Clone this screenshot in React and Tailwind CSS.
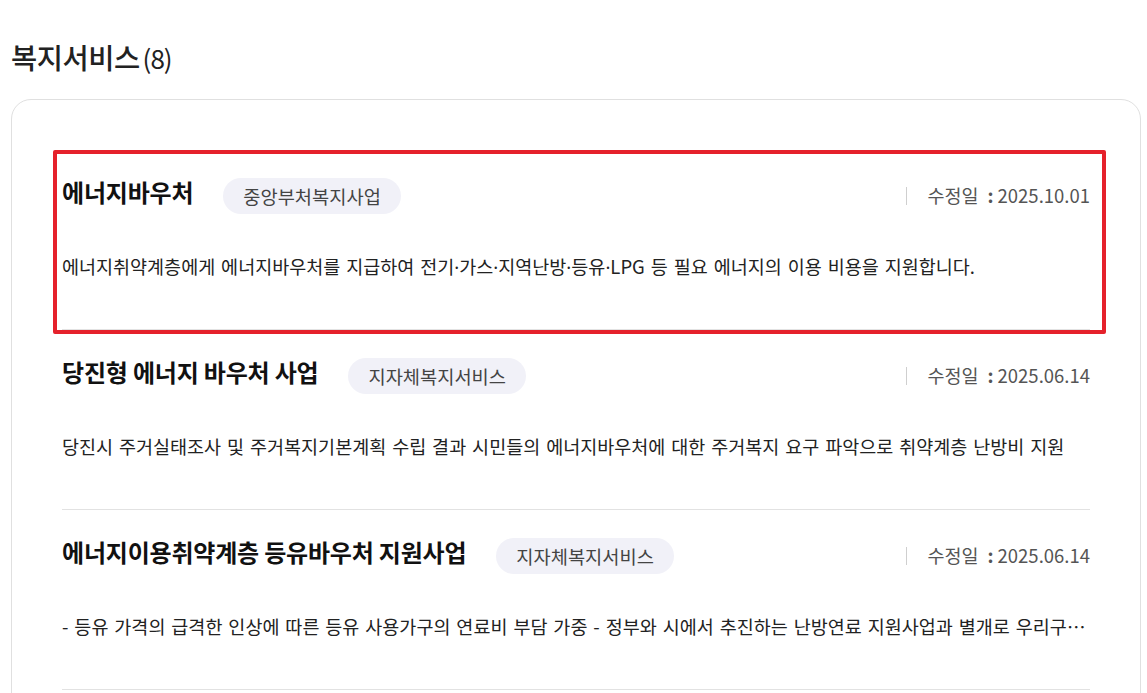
import React from "react";

const items = [
  {
    title: "에너지바우처",
    tag: "중앙부처복지사업",
    date: "2025.10.01",
    desc: "에너지취약계층에게 에너지바우처를 지급하여 전기·가스·지역난방·등유·LPG 등 필요 에너지의 이용 비용을 지원합니다.",
    marked: true,
  },
  {
    title: "당진형 에너지 바우처 사업",
    tag: "지자체복지서비스",
    date: "2025.06.14",
    desc: "당진시 주거실태조사 및 주거복지기본계획 수립 결과 시민들의 에너지바우처에 대한 주거복지 요구 파악으로 취약계층 난방비 지원",
  },
  {
    title: "에너지이용취약계층 등유바우처 지원사업",
    tag: "지자체복지서비스",
    date: "2025.06.14",
    desc: "- 등유 가격의 급격한 인상에 따른 등유 사용가구의 연료비 부담 가중 - 정부와 시에서 추진하는 난방연료 지원사업과 별개로 우리구 자체적으로 등유 사용 가구에 대한 추가 지원",
  },
  {
    title: "에너지 취약계층 난방비 지원",
    tag: "지자체복지서비스",
    date: "2025.05.20",
    desc: "에너지 취약계층의 겨울철 난방비 부담을 덜어드립니다.",
  },
];

// 가운뎃점은 CJK 폰트에서 전각으로 잡혀서 라틴 폰트로 따로 찍는다
function Desc({ text }) {
  const parts = text.split("·");
  return parts.map((p, i) => (
    <React.Fragment key={i}>
      {i > 0 && <span className="font-['Noto_Sans']">·</span>}
      {p}
    </React.Fragment>
  ));
}

function ServiceItem({ item }) {
  return (
    <li className="relative h-[180px] border-b border-[#e2e2e2] pt-[28px]">
      {item.marked && (
        <div className="absolute top-0 left-[-9px] right-[-16px] bottom-[-5px] rounded-[2px] border-[4px] border-[#e5212b] pointer-events-none" />
      )}
      <div className="flex items-center justify-between h-[28px]">
        <div className="flex items-center">
          <h3 className="text-[24px] leading-[28px] font-bold text-[#111] tracking-[-0.2px]">
            {item.title}
          </h3>
          <span className="ml-[30px] mt-[8px] h-[36px] px-[20px] flex items-center rounded-full bg-[#f1f1f8] text-[18.7px] text-[#444]">
            {item.tag}
          </span>
        </div>
        <div className="flex items-center mt-[8px] text-[18.5px] text-[#555]">
          <span className="w-px h-[18px] bg-[#cfcfcf] mr-[20px]" />
          <span>수정일</span>
          <span className="ml-[9px] mr-[4px] font-bold">:</span>
          <span>{item.date}</span>
        </div>
      </div>
      <p className="mt-[47px] text-[18.5px] leading-[26px] text-[#222] truncate [word-spacing:1.8px]">
        <Desc text={item.desc} />
      </p>
    </li>
  );
}

export default function App() {
  return (
    <div
      className="min-h-screen bg-white pl-[11px] pr-[6px] pt-[39px]"
      style={{ fontFamily: '"Noto Sans CJK KR", "Noto Sans", sans-serif' }}
    >
      <h2 className="flex items-baseline h-[36px] text-[28.5px] leading-[36px] font-medium text-[#222] tracking-[-0.5px]">
        복지서비스
        <span className="ml-[3px] text-[26px] font-normal text-[#222] tracking-[-1px]">(8)</span>
      </h2>
      <section className="mt-[24px] rounded-[20px] border border-[#e0e0e0] px-[50px] pt-[50px] pb-[40px]">
        <ul>
          {items.map((item) => (
            <ServiceItem key={item.title} item={item} />
          ))}
        </ul>
      </section>
    </div>
  );
}
